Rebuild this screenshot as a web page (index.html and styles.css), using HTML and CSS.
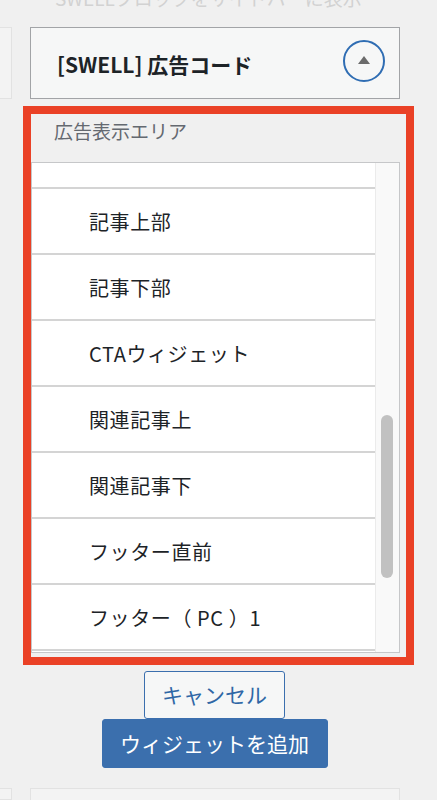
FILE: index.html
```html
<!DOCTYPE html>
<html lang="ja">
<head>
    <meta charset="UTF-8">
    <meta name="viewport" content="width=device-width, initial-scale=1.0">
    <title>[SWELL] 広告コード</title>
    <link rel="stylesheet" href="styles.css">
</head>
<body>
    <div class="hint"><span>SWELLブロックをサイドバーに表示</span></div>

    <div class="row">
        <div class="side"></div>
        <div class="main">
            <div class="widget-head">
                <h3>[SWELL] 広告コード</h3>
                <button class="toggle" aria-label="閉じる">
                    <svg width="14" height="10" viewBox="0 0 14 10"><path d="M7 1 L13 9 L1 9 Z" fill="#6b6b6b"/></svg>
                </button>
            </div>

            <div class="area-box">
                <div class="area-label">広告表示エリア</div>
                <div class="select-list">
                    <div class="items">
                        <div class="items-inner">
                            <div class="item"></div>
                            <div class="item">記事上部</div>
                            <div class="item">記事下部</div>
                            <div class="item">CTAウィジェット</div>
                            <div class="item">関連記事上</div>
                            <div class="item">関連記事下</div>
                            <div class="item">フッター直前</div>
                            <div class="item">フッター（ PC ）1</div>
                            <div class="item"></div>
                        </div>
                    </div>
                    <div class="scrollbar"><div class="thumb"></div></div>
                </div>
            </div>

            <div class="actions">
                <button class="btn btn-cancel">キャンセル</button>
                <button class="btn btn-add">ウィジェットを追加</button>
            </div>
        </div>
    </div>

    <div class="row row-next">
        <div class="side"></div>
        <div class="main"><div class="next-box"></div></div>
    </div>
</body>
</html>
```

FILE: styles.css
```css
body {
    margin: 0;
    background-color: #f0f0f0;
    font-family: "Noto Sans CJK JP", "Noto Sans", sans-serif;
    color: #1d2327;
    height: 800px;
    overflow: hidden;
}
.hint {
    height: 27px;
    overflow: hidden;
    padding-left: 55px;
}
.hint span {
    display: block;
    margin-top: -13px;
    font-size: 19px;
    line-height: 22px;
    color: #d2d2d2;
}
.row {
    display: flex;
    align-items: flex-start;
}
.side {
    width: 12px;
    height: 72px;
    background-color: #f3f3f3;
    border: 1px solid #e2e2e2;
    border-left: none;
    box-sizing: border-box;
}
.main {
    width: 370px;
    margin-left: 18px;
}
.widget-head {
    height: 72px;
    box-sizing: border-box;
    border: 1px solid #a2a4a7;
    background-color: #f6f7f7;
    display: flex;
    align-items: center;
    justify-content: space-between;
    padding: 0 14px 0 26px;
}
.widget-head h3 {
    margin: 2px 0 0;
    font-size: 21px;
    font-weight: 700;
}
.toggle {
    width: 42px;
    height: 42px;
    border: 2px solid #2f6db3;
    border-radius: 50%;
    background: transparent;
    display: flex;
    align-items: center;
    justify-content: center;
    padding: 0 0 2px;
    margin-top: -5px;
}
.area-box {
    margin: 7px 0 0 -7px;
    width: 391px;
    height: 559px;
    box-sizing: border-box;
    border: 8px solid #ea4126;
    padding: 0 6px 0 0;
}
.area-label {
    height: 48px;
    padding-left: 23px;
    font-size: 19px;
    line-height: 34px;
    color: #646970;
}
.select-list {
    height: 491px;
    box-sizing: border-box;
    border: 1px solid #c6c7c9;
    background-color: #fff;
    display: flex;
}
.items {
    flex: 1;
    overflow: hidden;
}
.items-inner {
    margin-top: -40px;
}
.item {
    height: 66px;
    box-sizing: border-box;
    border-bottom: 2px solid #d4d4d4;
    padding-left: 57px;
    display: flex;
    align-items: center;
    font-size: 20px;
    letter-spacing: 0.6px;
}
.scrollbar {
    width: 24px;
    background-color: #f9f9f9;
    border-left: 1px solid #ebebeb;
    box-sizing: border-box;
}
.thumb {
    width: 12px;
    height: 163px;
    margin: 252px 0 0 5px;
    background-color: #c1c1c1;
    border-radius: 6px;
}
.actions {
    display: flex;
    flex-direction: column;
    align-items: center;
    margin-top: 6px;
    margin-left: -1px;
}
.btn {
    font-family: inherit;
    font-size: 21px;
    border-radius: 3px;
    line-height: 1.2;
    padding: 0;
}
.btn-cancel {
    width: 141px;
    height: 48px;
    border: 1px solid #3b6fae;
    background-color: #f6f7f7;
    color: #2f67a6;
}
.btn-add {
    width: 226px;
    height: 49px;
    border: 1px solid #3b6fae;
    background-color: #3b6fad;
    color: #fff;
}
.row-next {
    margin-top: 20px;
}
.row-next .side,
.next-box {
    height: 12px;
}
.next-box {
    box-sizing: border-box;
    background-color: #f3f3f3;
    border: 1px solid #e2e2e2;
    border-bottom: none;
}
```
